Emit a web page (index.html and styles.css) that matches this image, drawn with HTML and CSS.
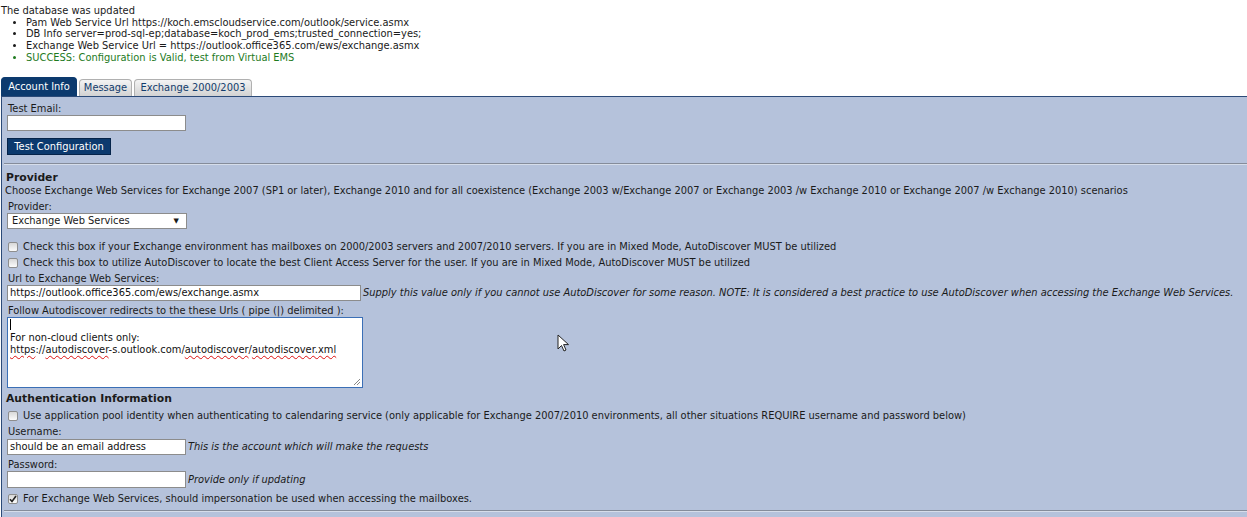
FILE: index.html
```html
<!DOCTYPE html>
<html>
<head>
<meta charset="utf-8">
<link rel="stylesheet" href="styles.css">
</head>
<body>
<div class="status">
  <div class="status-title">The database was updated</div>
  <ul class="status-list">
    <li>Pam Web Service Url https://koch.emscloudservice.com/outlook/service.asmx</li>
    <li>DB Info server=prod-sql-ep;database=koch_prod_ems;trusted_connection=yes;</li>
    <li>Exchange Web Service Url = https://outlook.office365.com/ews/exchange.asmx</li>
    <li class="success">SUCCESS: Configuration is Valid, test from Virtual EMS</li>
  </ul>
</div>

<div class="tabs">
  <div class="tab active tab-account">Account Info</div>
  <div class="tab tab-message">Message</div>
  <div class="tab tab-exchange">Exchange 2000/2003</div>
</div>

<div class="panel">
  <div class="label">Test Email:</div>
  <div class="input w178"></div>
  <div class="button">Test Configuration</div>

  <div class="sep"></div>

  <div class="heading">Provider</div>
  <div class="desc">Choose Exchange Web Services for Exchange 2007 (SP1 or later), Exchange 2010 and for all coexistence (Exchange 2003 w/Exchange 2007 or Exchange 2003 /w Exchange 2010 or Exchange 2007 /w Exchange 2010) scenarios</div>
  <div class="label mt4">Provider:</div>
  <div class="select"><span>Exchange Web Services</span><span class="arrow">▼</span></div>

  <div class="cb-row mt10"><span class="cb"></span>Check this box if your Exchange environment has mailboxes on 2000/2003 servers and 2007/2010 servers. If you are in Mixed Mode, AutoDiscover MUST be utilized</div>
  <div class="cb-row"><span class="cb"></span>Check this box to utilize AutoDiscover to locate the best Client Access Server for the user. If you are in Mixed Mode, AutoDiscover MUST be utilized</div>

  <div class="label mt2">Url to Exchange Web Services:</div>
  <div class="field-row">
    <div class="input w354">https://outlook.office365.com/ews/exchange.asmx</div>
    <span class="note">Supply this value only if you cannot use AutoDiscover for some reason. NOTE: It is considered a best practice to use AutoDiscover when accessing the Exchange Web Services.</span>
  </div>

  <div class="label mt4">Follow Autodiscover redirects to the these Urls ( pipe (|) delimited ):</div>
  <div class="textarea">
    <div class="caret-line"><span class="caret"></span></div>
    <div>For non-cloud clients only:</div>
    <div><span class="spell">https</span>://<span class="spell">autodiscover</span>-s.outlook.com/<span class="spell">autodiscover</span>/<span class="spell">autodiscover.xml</span></div>
    <svg class="grip" width="8" height="8" viewBox="0 0 8 8"><path d="M7 1L1 7M7 4L4 7" stroke="#888" stroke-width="1" fill="none"/></svg>
  </div>

  <div class="heading mt4">Authentication Information</div>
  <div class="cb-row mt2"><span class="cb"></span>Use application pool identity when authenticating to calendaring service (only applicable for Exchange 2007/2010 environments, all other situations REQUIRE username and password below)</div>

  <div class="label mt2">Username:</div>
  <div class="field-row mt1">
    <div class="input w178">should be an email address</div>
    <span class="note">This is the account which will make the requests</span>
  </div>

  <div class="label mt4">Password:</div>
  <div class="field-row">
    <div class="input w178 h17"></div>
    <span class="note">Provide only if updating</span>
  </div>

  <div class="cb-row mt3"><span class="cb checked"><svg width="8" height="8" viewBox="0 0 8 8"><path d="M1 4.2L3 6.5L7 1" stroke="#222" stroke-width="1.6" fill="none"/></svg></span>For Exchange Web Services, should impersonation be used when accessing the mailboxes.</div>

  <div class="sep bottom"></div>
</div>

<svg class="cursor" width="13" height="19" viewBox="0 0 13 19"><path d="M1 1L1 15L4.5 11.5L7 17L9 16L6.6 10.6L11.5 10.6Z" fill="#fff" stroke="#222" stroke-width="1"/></svg>
</body>
</html>
```

FILE: styles.css
```css
html, body {
  margin: 0;
  padding: 0;
  background: #ffffff;
}
body {
  font-family: "DejaVu Sans", Verdana, sans-serif;
  font-size: 9.9px;
  color: #1a1a1a;
  position: relative;
  height: 517px;
  overflow: hidden;
}
.status {
  padding-top: 5px;
  line-height: 11.7px;
}
.status-title {
  padding-left: 1px;
}
.status-list {
  margin: 0;
  padding-left: 26px;
  list-style: disc;
}
.success {
  color: #1e7a1e;
}
.tabs {
  display: flex;
  gap: 2px;
  margin-top: 13px;
  padding-left: 1px;
  height: 19px;
  align-items: flex-end;
}
.tab {
  box-sizing: border-box;
  height: 17px;
  line-height: 16px;
  text-align: center;
  border: 1px solid #b0b0b0;
  border-bottom: none;
  border-radius: 4px 4px 0 0;
  background: linear-gradient(#f4f4f4, #d2d2d2);
  color: #123c6c;
  white-space: nowrap;
}
.tab-account { width: 76px; }
.tab-message { width: 53px; }
.tab-exchange { width: 118px; }
.tab.active {
  height: 19px;
  line-height: 18px;
  background: #0c3a6e;
  border-color: #0c3a6e;
  color: #ffffff;
}
.panel {
  background: #b5c2db;
  border-top: 1px solid #2b4a78;
  border-left: 1px solid #2b4a78;
  margin-left: 1px;
  padding: 6px 0 0 3px;
  height: 420px;
}
.label {
  line-height: 12px;
  padding-left: 3px;
}
.input {
  box-sizing: border-box;
  height: 16px;
  line-height: 14px;
  background: #ffffff;
  border: 1px solid #8c8c8c;
  padding: 0 2px;
  margin-left: 2px;
  color: #111;
  white-space: nowrap;
}
.w178 { width: 179px; }
.w354 { width: 354px; }
.h17 { height: 17px; }
.button {
  display: inline-block;
  margin: 7px 0 0 2px;
  height: 17px;
  line-height: 15px;
  width: 104px;
  text-align: center;
  background: #0c3a6e;
  color: #ffffff;
  border: 1px solid #06244a;
  box-sizing: border-box;
  white-space: nowrap;
}
.sep {
  height: 0;
  border-top: 1px solid #858c9a;
  border-bottom: 1px solid #d6ddea;
  margin: 8px 0 0 -1px;
}
.sep.bottom {
  margin-top: 3px;
}
.heading {
  font-weight: bold;
  font-size: 10.8px;
  line-height: 14px;
  margin-top: 6px;
  padding-left: 1px;
}
.desc {
  line-height: 12px;
  white-space: nowrap;
}
.select {
  box-sizing: border-box;
  width: 180px;
  height: 16px;
  margin-left: 2px;
  background: #fff;
  border: 1px solid #8c8c8c;
  display: flex;
  justify-content: space-between;
  align-items: center;
  padding: 0 7px 0 4px;
}
.arrow {
  font-size: 7px;
}
.cb-row {
  display: flex;
  align-items: center;
  height: 16px;
  line-height: 16px;
  white-space: nowrap;
}
.cb {
  box-sizing: border-box;
  width: 10px;
  height: 10px;
  border: 1px solid #8e8e8e;
  border-radius: 2px;
  background: linear-gradient(#d8d8d8, #fbfbfb);
  margin: 0 5px 0 3px;
  display: flex;
  align-items: center;
  justify-content: center;
}
.field-row {
  display: flex;
  align-items: center;
}
.note {
  font-style: italic;
  margin-left: 2px;
  white-space: nowrap;
}
.textarea {
  position: relative;
  box-sizing: border-box;
  width: 356px;
  height: 71px;
  margin-left: 2px;
  background: #fff;
  border: 1px solid #3b6fb6;
  padding: 0 2px 0 2px;
  line-height: 12px;
  color: #111;
}
.caret-line {
  height: 14px;
  padding-top: 1px;
  box-sizing: border-box;
}
.caret {
  display: inline-block;
  width: 1px;
  height: 11px;
  background: #000;
  vertical-align: top;
}
.spell {
  text-decoration: underline wavy #d11;
  text-decoration-thickness: 1px;
  text-underline-offset: 2px;
}
.grip {
  position: absolute;
  right: 1px;
  bottom: 1px;
}
.mt1 { margin-top: 1px; }
.mt2 { margin-top: 2px; }
.mt3 { margin-top: 3px; }
.mt4 { margin-top: 4px; }
.mt10 { margin-top: 10px; }
.cursor {
  position: absolute;
  left: 557px;
  top: 334px;
}
```
